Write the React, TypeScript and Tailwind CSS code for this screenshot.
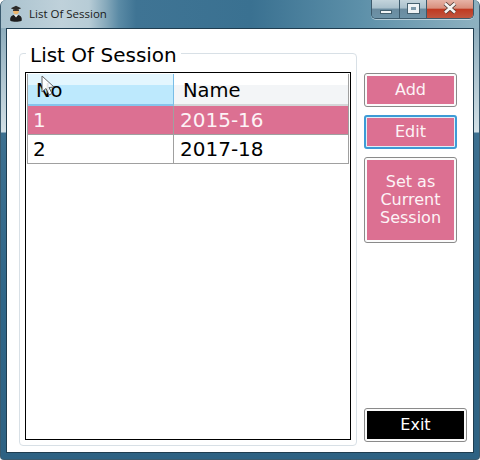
const pink = "bg-[#dc7092]";

function Cell({ w, children, className = "" }: { w: string; children: React.ReactNode; className?: string }) {
  return <div className={`${w} ${className} flex items-center`}>{children}</div>;
}

function AppIcon() {
  return (
    <svg width="14" height="17" viewBox="0 0 14 17" className="shrink-0">
      <path d="M1.500 16c-1-3 .5-5.500 3.500-6l2 1.500 2-1.500c3 .5 4.500 3 3.500 6-3 1-8.500 1-11 0z" fill="#1e1e1e" />
      <path d="M4.800 9.800h4.400L7 12.500z" fill="#ecebe6" />
      <circle cx="7" cy="6.500" r="2.800" fill="#eeb66c" />
      <path d="M1.800 3.300 7 .8l5.200 2.500L7 5.500z" fill="#2c2a28" />
      <path d="M4 4.500h6V6H4z" fill="#3a3330" />
    </svg>
  );
}

function WinControls() {
  return (
    <div className="flex h-[19px] w-[103px] border border-t-0 border-[#3c5a6c] rounded-b-[5px] overflow-hidden shadow-[0_1px_0_rgba(255,255,255,0.5)]">
      <div className="w-[28px] border-r border-[#3c5a6c] flex items-center justify-center bg-[linear-gradient(to_bottom,#c3d4dc_0%,#a9c0cc_45%,#6a8b9f_50%,#6d93a8_100%)]">
        <div className="w-[12px] h-[4px] mt-[5px] bg-[#f1f5f7] border border-[#44606f]" />
      </div>
      <div className="w-[27px] border-r border-[#3c5a6c] flex items-center justify-center bg-[linear-gradient(to_bottom,#c3d4dc_0%,#a9c0cc_45%,#6a8b9f_50%,#6d93a8_100%)]">
        <div className="w-[11px] h-[9px] mb-[2px] border-[3px] border-[#eef3f6] bg-[#7d9aab] outline outline-1 outline-[#44606f]" />
      </div>
      <div className="flex-1 flex items-center justify-center bg-[linear-gradient(to_bottom,#e6b3a6_0%,#d98f7d_45%,#c03a22_52%,#c0563f_100%)]">
        <svg width="16" height="12" viewBox="0 0 16 12" className="mb-[2px]">
          <path d="M3 1.500 13 10.500M13 1.500 3 10.500" stroke="#4f3a34" strokeWidth="4.200" />
          <path d="M3 1.500 13 10.500M13 1.500 3 10.500" stroke="#f6f4f2" strokeWidth="2.600" />
        </svg>
      </div>
    </div>
  );
}

function Btn({ className, children }: { className: string; children: React.ReactNode }) {
  return (
    <button className={`w-[93px] flex items-center justify-center rounded-[3px] text-[#fdf3f6] text-[16px] leading-[18px] text-center ${className}`}>
      {children}
    </button>
  );
}

export default function App() {
  return (
    <div
      className="relative w-[480px] h-[460px] overflow-hidden flex flex-col bg-[linear-gradient(to_bottom,#7b9fb1_0,#d3e0e6_132px,#3d7090_133px,#2f6688_300px,#2e6283_460px)] text-black border border-[#3a5a6e] border-t-0 rounded-t-[6px] rounded-b-[4px]"
      style={{ fontFamily: '"DejaVu Sans", Verdana, sans-serif' }}
    >
      {/* Title bar */}
      <div className="h-[28px] shrink-0 flex justify-between pr-[5px] bg-[linear-gradient(to_right,#a9c2ce_0,#bfd1da_60px,#b7ccd6_88px,#86a9bb_105px,#5a8aa5_118px,#3f7494_135px,#3a7191_250px,#5d90a9_360px,#8fb2c1_480px)]">
        <div className="flex items-start gap-[6px] pt-[5px] pl-[8px]">
          <AppIcon />
          <span className="text-[11.500px] leading-[18px] text-[#1a1a1a]" style={{ fontFamily: '"Open Sans", sans-serif' }}>
            List Of Session
          </span>
        </div>
        <WinControls />
      </div>

      {/* Client area */}
      <div className="flex-1 ml-[5px] mr-[5px] mb-[6px] bg-white border border-[#1f3d50] flex pl-[12px] pr-[5px] pt-[24px] pb-[6px] min-h-0">
        {/* Group box */}
        <div className="relative w-[338px] shrink-0 border border-[#d8e0e6] rounded-[4px] px-[5px] pt-[18px] pb-[5px]">
          <div className="absolute left-[6px] top-[-11px] bg-white px-[4px] text-[20px] leading-[24px] whitespace-nowrap">
            List Of Session
          </div>
          <div className="h-full border border-black p-px">
            <div className="border border-[#a0a0a0] border-t-0 text-[20px]">
              {/* header */}
              <div className="flex h-[32px]">
                <Cell
                  w="w-[146px]"
                  className="pl-[8px] pt-[4px] text-[19.500px] border-r border-[#79bde6] border-b-2 border-b-[#86c4ec] bg-[linear-gradient(to_bottom,#e3f6fe_37%,#bde9fd_37%)]"
                >
                  No
                </Cell>
                <Cell
                  w="flex-1"
                  className="pl-[9px] pt-[4px] text-[19.500px] border-b-2 border-b-[#d4d6d8] bg-[linear-gradient(to_bottom,#ffffff_37%,#f3f5f7_37%)]"
                >
                  Name
                </Cell>
              </div>
              {/* rows */}
              <div className={`flex h-[29px] ${pink} text-[#fdf3f6] border-b border-[#a0a0a0]`}>
                <Cell w="w-[146px]" className="pl-[5px] border-r border-[#a0a0a0]">1</Cell>
                <Cell w="flex-1" className="pl-[6px]">2015-16</Cell>
              </div>
              <div className="flex h-[28px]">
                <Cell w="w-[146px]" className="pl-[5px] border-r border-[#a0a0a0]">2</Cell>
                <Cell w="flex-1" className="pl-[6px]">2017-18</Cell>
              </div>
            </div>
          </div>
        </div>

        {/* Buttons */}
        <div className="flex-1 flex flex-col items-start pl-[7px] pt-[20px] pb-[4px]">
          <Btn className={`h-[34px] ${pink} border-[3px] border-[#fbfbfb] outline outline-1 -outline-offset-1 outline-[#8a8a8a]`}>Add</Btn>
          <Btn className={`h-[34px] mt-[8px] ${pink} border-[3px] border-[#dff0fa] outline outline-2 -outline-offset-2 outline-[#3d9bd6]`}>Edit</Btn>
          <Btn className={`h-[86px] mt-[8px] ${pink} border-[3px] border-[#fbfbfb] outline outline-1 -outline-offset-1 outline-[#8a8a8a]`}>
            Set as<br />Current<br />Session
          </Btn>
          <button className="mt-auto w-[103px] h-[34px] bg-black text-white text-[16px] rounded-[3px] border-[3px] border-[#fbfbfb] outline outline-1 -outline-offset-1 outline-[#8a8a8a]">
            Exit
          </button>
        </div>
      </div>

      {/* Mouse pointer */}
      <svg width="14" height="22" viewBox="0 0 14 22" className="absolute left-[40px] top-[75px]">
        <path d="M1 1v16l4-3.500 3 6.500 3-1.500-3-6 5-.5z" fill="#ffffff" stroke="#555" strokeWidth="1" opacity="0.9" />
      </svg>
    </div>
  );
}
